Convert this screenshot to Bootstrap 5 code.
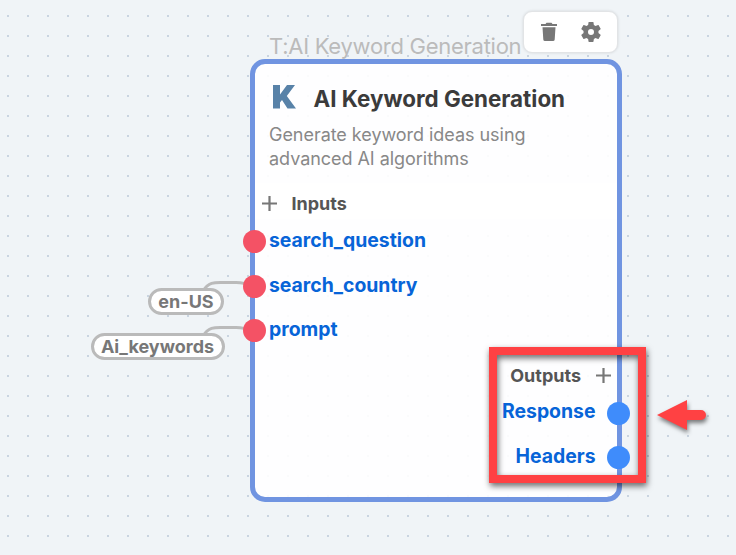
<!DOCTYPE html>
<html lang="en">
<head>
<meta charset="utf-8">
<meta name="viewport" content="width=device-width, initial-scale=1">
<title>AI Keyword Generation</title>
<link rel="stylesheet" href="https://cdn.jsdelivr.net/npm/bootstrap@5.3.0/dist/css/bootstrap.min.css">
<style>
body{font-family:Inter,"Liberation Sans",sans-serif;margin:0}
.canvas{width:736px;height:555px;background:conic-gradient(from 0deg at 2px 2px,transparent 0 270deg,#c9d4e0 270deg) 7px 15px/20px 20px #f0f4f7}
.node-caption{left:269px;top:32px;font-size:22px;letter-spacing:-.27px;line-height:28px;color:#bbb}
.toolbox{left:523px;top:11px;width:95px;height:42px;border:1px solid #e2e4e6;border-radius:9px;box-shadow:0 0 3px rgba(0,0,0,.12);padding:0 16px}
.node{left:249.5px;top:59px;width:372.5px;height:442.5px;border:5px solid #7094e1;border-radius:15px;background:rgba(255,255,255,.9);background-clip:padding-box}
.node-head{height:59px;padding:20px 0 0 18px}
.node-title{font-size:22.4px;line-height:30px;font-weight:700;color:#3b3b3b;margin-left:18px}
.node-desc{font-size:18px;letter-spacing:-.04px;line-height:24px;height:60px;padding-left:14.5px;color:#888}
.section{height:36px;font-size:18px;font-weight:700;color:#555}
.section.ins{padding-left:7px;padding-top:4px;gap:15px;background:#fff}
.section.outs{padding-right:6px;padding-top:9px;gap:15px}
.port{position:relative;height:44.7px;line-height:42.5px;font-size:19.4px;font-weight:700;color:#0764d8}
.port.in{padding-left:14.5px}
.port.out{padding-right:21.5px;line-height:45px}
.pin{position:absolute;width:23px;height:23px;border-radius:50%;top:11px}
.in .pin{left:-11.5px;background:#f45265}
.out .pin{right:-13px;top:12.5px;background:#3f8cfb}
.value{height:27px;border:3px solid #bababa;border-radius:14px;background:#fff;color:#777;font-size:18px;font-weight:700;line-height:21px}
.highlight{left:489px;top:347px;width:157px;height:136px;border:8px solid #ff4143;filter:drop-shadow(1px 3px 3px rgba(0,0,0,.6))}
.overlay{left:0;top:0}
.arrow{filter:drop-shadow(1px 3px 2px rgba(0,0,0,.5))}
</style>
<script src="https://cdn.jsdelivr.net/npm/bootstrap@5.3.0/dist/js/bootstrap.bundle.min.js"></script>
</head>
<body>
<main class="canvas position-relative overflow-hidden">
  <div class="node-caption position-absolute text-nowrap">T:AI Keyword Generation</div>
  <div class="toolbox position-absolute bg-white d-flex align-items-center justify-content-between">
    <svg width="18" height="20" viewBox="0 0 18 20" fill="#777"><path d="M1 2h4.500l1-1.200h5l1 1.200h4.500v2H1zM2.500 5.200h13l-.8 12.300q-.1 1.500-1.700 1.500H5q-1.600 0-1.700-1.500z"/></svg>
    <svg width="20" height="20" viewBox="2 2 20 20" fill="#777"><path fill-rule="evenodd" d="M19.430 12.980c.04-.32.07-.64.07-.98s-.03-.66-.07-.98l2.110-1.650c.19-.15.24-.42.12-.64l-2-3.460c-.12-.22-.39-.3-.61-.22l-2.490 1c-.52-.4-1.080-.73-1.690-.98l-.38-2.650C14.460 2.180 14.250 2 14 2h-4c-.25 0-.46.18-.49.42l-.38 2.650c-.61.25-1.170.59-1.690.98l-2.490-1c-.23-.09-.49 0-.61.22l-2 3.460c-.13.22-.07.49.12.64l2.110 1.650c-.04.32-.07.65-.07.98s.03.66.07.98l-2.110 1.650c-.19.15-.24.42-.12.64l2 3.460c.12.22.39.3.61.22l2.490-1c.52.4 1.080.73 1.690.98l.38 2.650c.03.24.24.42.49.42h4c.25 0 .46-.18.49-.42l.38-2.650c.61-.25 1.170-.59 1.690-.98l2.490 1c.23.09.49 0 .61-.22l2-3.460c.12-.22.07-.49-.12-.64zM12 15a3 3 0 1 1 0-6 3 3 0 0 1 0 6z"/></svg>
  </div>
  <svg class="overlay position-absolute" width="736" height="555" fill="none" stroke="#bababa" stroke-width="3"><path d="M203 291C209 281 216 282.500 225 282.500H236Q245 282.500 250 286M203 336C209 326 216 327.500 225 327.500H236Q245 327.500 250 331"/></svg>
  <section class="node position-absolute">
    <div class="node-head d-flex">
      <svg width="23" height="26" viewBox="0 0 23 26" fill="#5882a8"><path d="M0 1h7v9.500L14 1h8l-8.200 11L23 24.500h-8.500L9 16l-2 2.500v6H0z"/></svg>
      <div class="node-title text-nowrap">AI Keyword Generation</div>
    </div>
    <div class="node-desc">Generate keyword ideas using<br>advanced AI algorithms</div>
    <div class="section ins d-flex align-items-center">
      <svg width="15" height="15" stroke="#777" stroke-width="2.200"><path d="M7.500 0v15M0 7.500h15"/></svg><span>Inputs</span>
    </div>
    <div class="port in"><span class="pin"></span>search_question</div>
    <div class="port in"><span class="pin"></span>search_country</div>
    <div class="port in"><span class="pin"></span>prompt</div>
    <div class="section outs d-flex align-items-center justify-content-end">
      <span>Outputs</span><svg width="15" height="15" stroke="#777" stroke-width="2.200"><path d="M7.500 0v15M0 7.500h15"/></svg>
    </div>
    <div class="port out text-end"><span class="pin"></span>Response</div>
    <div class="port out text-end"><span class="pin"></span>Headers</div>
  </section>
  <div class="value position-absolute text-center" style="left:148px;top:288px;width:76px">en-US</div>
  <div class="value position-absolute text-center" style="left:90.500px;top:333px;width:134px">Ai_keywords</div>
  <div class="highlight position-absolute"></div>
  <svg class="overlay arrow position-absolute" width="736" height="555" fill="#ff4143"><path d="M657 415L687 400V410H701A5 5 0 0 1 701 420H687V430Z"/></svg>
</main>
</body>
</html>
